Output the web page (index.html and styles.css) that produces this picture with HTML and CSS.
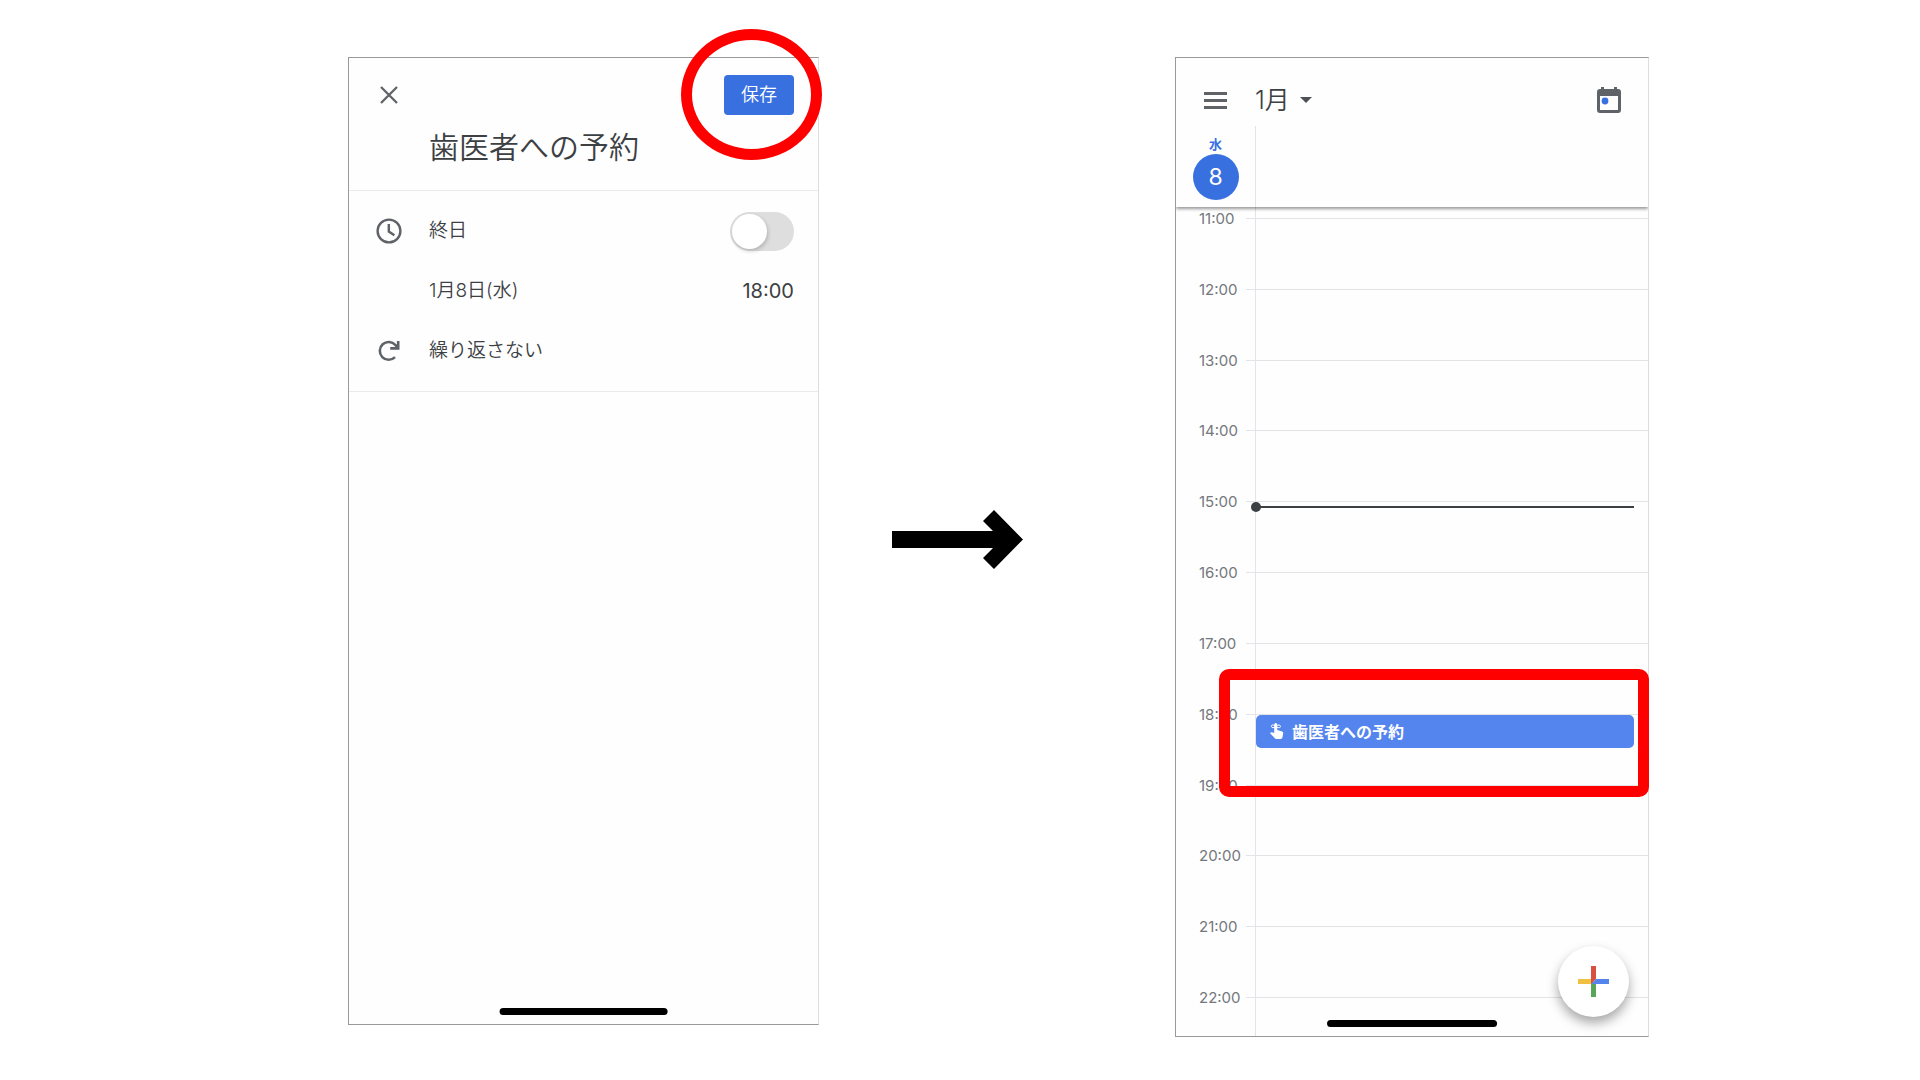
FILE: index.html
```html
<!DOCTYPE html>
<html lang="ja">
<head>
    <meta charset="UTF-8">
    <meta name="viewport" content="width=device-width, initial-scale=1.0">
    <title>カレンダー - リマインダーの保存</title>
    <link rel="stylesheet" href="styles.css">
</head>
<body>
    <main class="steps">
        <section class="step step-edit">
            <div class="phone phone-edit">
                <header class="edit-header">
                    <div class="edit-toolbar">
                        <button class="icon-button" type="button" aria-label="閉じる">
                            <svg width="18" height="18" viewBox="0 0 18 18" fill="none" stroke="#5f6368" stroke-width="2.3">
                                <path d="M1 1l16 16M17 1L1 17"/>
                            </svg>
                        </button>
                        <button class="save-button" type="button">保存</button>
                    </div>
                    <input class="title-input" type="text" value="歯医者への予約" aria-label="タイトル">
                </header>

                <div class="options">
                    <div class="option">
                        <span class="option-icon">
                            <svg width="26" height="26" viewBox="0 0 26 26" fill="none" stroke="#5f6368" stroke-width="2.4">
                                <circle cx="13" cy="13" r="11.4"/>
                                <path d="M12.8 6v7.6l5.6 3.6"/>
                            </svg>
                        </span>
                        <label class="option-text" for="allDay">終日</label>
                        <input class="switch" type="checkbox" id="allDay">
                    </div>
                    <div class="option">
                        <span class="option-icon"></span>
                        <button class="option-text" type="button">1月8日(水)</button>
                        <button class="option-time" type="button">18:00</button>
                    </div>
                    <div class="option">
                        <span class="option-icon">
                            <svg width="22" height="22" viewBox="0 0 22 22" fill="none" stroke="#5f6368" stroke-width="2.6">
                                <path d="M17 17.200A8.900 8.900 0 1 1 17.400 5L19.500 7.200"/>
                                <path d="M20.200 1v7.400h-8" />
                            </svg>
                        </span>
                        <button class="option-text" type="button">繰り返さない</button>
                    </div>
                </div>
                <div class="home-bar"></div>
            </div>
            <div class="mark-circle"></div>
        </section>

        <svg class="arrow" width="131" height="59" viewBox="0 0 131 59">
            <path d="M0 21h101L91 11 102 0l29 29.500L102 59 91 48l10-10H0z"/>
        </svg>

        <section class="step step-day">
            <div class="phone phone-day">
                <header class="day-header">
                    <div class="day-toolbar">
                        <button class="icon-button menu-button" type="button" aria-label="メニュー">
                            <svg width="23" height="17" viewBox="0 0 23 17" fill="#5f6368">
                                <path d="M0 0h23v3H0zM0 7h23v3H0zM0 14h23v3H0z"/>
                            </svg>
                        </button>
                        <button class="month-button" type="button">
                            1月
                            <svg width="12" height="6" viewBox="0 0 12 6" fill="#4d5156">
                                <path d="M0 0h12L6 6z"/>
                            </svg>
                        </button>
                        <button class="icon-button today-button" type="button" aria-label="今日">
                            <svg width="24" height="26" viewBox="0 0 24 26">
                                <path fill="#5f6368" fill-rule="evenodd" d="M4 0h3v2h10V0h3v2h1a3 3 0 0 1 3 3v18a3 3 0 0 1-3 3H3a3 3 0 0 1-3-3V5a3 3 0 0 1 3-3h1zM3 9v14h18V9z"/>
                                <circle cx="8" cy="14" r="3.400" fill="#3870e0"/>
                            </svg>
                        </button>
                    </div>
                    <div class="day-strip">
                        <div class="day">
                            <span class="day-name">水</span>
                            <span class="day-number">8</span>
                        </div>
                        <div class="all-day"></div>
                    </div>
                </header>

                <div class="hours">
                    <div class="hour hour-lead"><div class="slot"></div></div>
                    <div class="hour"><time>11:00</time><div class="slot"></div></div>
                    <div class="hour"><time>12:00</time><div class="slot"></div></div>
                    <div class="hour"><time>13:00</time><div class="slot"></div></div>
                    <div class="hour"><time>14:00</time><div class="slot"></div></div>
                    <div class="hour"><time>15:00</time><div class="slot"><div class="now"></div></div></div>
                    <div class="hour"><time>16:00</time><div class="slot"></div></div>
                    <div class="hour"><time>17:00</time><div class="slot"></div></div>
                    <div class="hour">
                        <time>18:00</time>
                        <div class="slot">
                            <a class="event" href="#">
                                <svg width="14" height="16" viewBox="0 0 14 16" fill="#fff">
                                    <path d="M4.200 1.500a1.500 1.500 0 0 1 3 0V7l5 1.500q1.200.5 1 1.800l-.7 4q-.3 1.700-1.800 1.700H6.500q-.8 0-1.400-.6L0 10.300l.8-.8q.4-.4 1-.2l2.400.6z"/>
                                    <path d="M5.700 3.300C3 1 1 2 1.400 3.600S4 5 5.700 3.300 10.500 1.500 10.500 3.400 7.500 5 5.700 3.300z" fill="none" stroke="#fff"/>
                                </svg>
                                歯医者への予約
                            </a>
                        </div>
                    </div>
                    <div class="hour"><time>19:00</time><div class="slot"></div></div>
                    <div class="hour"><time>20:00</time><div class="slot"></div></div>
                    <div class="hour"><time>21:00</time><div class="slot"></div></div>
                    <div class="hour"><time>22:00</time><div class="slot"></div></div>
                </div>

                <button class="add-button" type="button" aria-label="作成">
                    <svg width="31" height="31" viewBox="0 0 31 31">
                        <path fill="#f1bf42" d="M0 13h13v5H0z"/>
                        <path fill="#58a55c" d="M13 16h5v15h-5z"/>
                        <path fill="#5484ed" d="M18 13h13v5H13z"/>
                        <path fill="#d85140" d="M13 0h5v13l-5 5z"/>
                    </svg>
                </button>
                <div class="home-bar"></div>
            </div>
            <div class="mark-box"></div>
        </section>
    </main>
</body>
</html>
```

FILE: styles.css
```css
* {
    margin: 0;
    padding: 0;
    box-sizing: border-box;
}

body {
    font-family: Inter, 'Noto Sans CJK JP', sans-serif;
    background: #fff;
    color: #3c4043;
}

button {
    font: inherit;
    color: inherit;
    background: none;
    border: none;
    cursor: pointer;
}

svg {
    display: block;
}

.steps {
    display: grid;
    grid-template-columns: 348fr 471fr 356fr 474fr 271fr;
    align-items: start;
    padding: 57px 0 43px;
}

.step {
    position: relative;
}

.step-edit {
    grid-column: 2;
}

.step-day {
    grid-column: 4;
}

.arrow {
    grid-column: 3;
    align-self: center;
    margin-left: 73px;
    margin-bottom: 16px;
}

.phone {
    position: relative;
    display: flex;
    flex-direction: column;
    overflow: hidden;
    background: #fefefe;
    border: 1px solid #999;
    border-right-color: #ddd;
}

.phone-edit {
    min-height: 968px;
}

.phone-day {
    min-height: 980px;
}

.home-bar {
    position: absolute;
    left: 50%;
    bottom: 9px;
    width: 36%;
    height: 7px;
    border-radius: 4px;
    background: #000;
    transform: translateX(-50%);
}

.icon-button {
    display: flex;
    align-items: center;
    justify-content: center;
}

/* reminder form */
.edit-header {
    border-bottom: 1px solid #e8eaed;
    padding-bottom: 20px;
}

.edit-toolbar {
    display: flex;
    align-items: center;
    justify-content: space-between;
    height: 74px;
    padding: 0 24px 0 31px;
}

.save-button {
    width: 70px;
    height: 40px;
    border-radius: 4px;
    background: #3870e0;
    color: #fff;
    font-size: 18px;
    font-weight: 350;
    line-height: 24px;
}

.title-input {
    display: block;
    width: 100%;
    height: 46px;
    margin-top: -8px;
    padding: 0 24px 0 80px;
    border: none;
    outline: none;
    background: none;
    color: #3c4043;
    font-family: inherit;
    font-size: 30px;
    font-weight: 350;
    line-height: 46px;
}

.options {
    padding: 10px 24px 10px 0;
    border-bottom: 1px solid #e8eaed;
}

.option {
    display: flex;
    align-items: center;
    height: 60px;
    font-size: 19px;
    line-height: 26px;
}

.option-icon {
    display: flex;
    justify-content: center;
    width: 80px;
}

.option-text {
    flex: 1;
    text-align: left;
    font-weight: 350;
}

.option-time {
    font-size: 20px;
}

.switch {
    appearance: none;
    width: 64px;
    height: 39px;
    padding: 2px;
    border-radius: 20px;
    background: #dededf;
    cursor: pointer;
}

.switch::before {
    content: "";
    display: block;
    width: 35px;
    height: 35px;
    border-radius: 50%;
    background: #fff;
    box-shadow: 1px 2px 4px rgba(0, 0, 0, 0.2);
}

.switch:checked {
    background: #3870e0;
}

.switch:checked::before {
    margin-left: auto;
}

.mark-circle {
    position: absolute;
    top: -28px;
    right: -3px;
    width: 141px;
    height: 131px;
    border: 11px solid #f00;
    border-radius: 50%;
    pointer-events: none;
}

/* day view */
.day-header {
    position: relative;
    z-index: 1;
    background: #fefefe;
    box-shadow: 0 2px 3px rgba(0, 0, 0, 0.4);
}

.day-toolbar {
    display: flex;
    align-items: center;
    height: 68px;
    padding-top: 16px;
}

.menu-button {
    width: 79px;
}

.month-button {
    display: flex;
    align-items: center;
    gap: 10px;
    font-size: 25px;
    font-weight: 350;
    line-height: 36px;
}

.today-button {
    margin-left: auto;
    margin-right: 27px;
}

.day-strip {
    display: flex;
    height: 81px;
}

.day {
    display: flex;
    flex-direction: column;
    align-items: center;
    gap: 1px;
    width: 79px;
    padding-top: 9px;
}

.day-name {
    color: #3870e0;
    font-size: 13px;
    font-weight: 700;
    line-height: 18px;
}

.day-number {
    width: 46px;
    height: 46px;
    border-radius: 50%;
    background: #3870e0;
    color: #fff;
    font-size: 23px;
    line-height: 46px;
    text-align: center;
}

.all-day {
    flex: 1;
    border-left: 1px solid #e3e4e8;
}

.hours {
    flex: 1;
    display: grid;
    grid-template-rows: 11px repeat(11, minmax(48px, 1fr)) 39px;
}

.hour {
    display: flex;
}

.hour time {
    width: 70px;
    margin-top: -9px;
    padding-left: 23px;
    color: #74777c;
    font-size: 15px;
    line-height: 20px;
}

.hour::before {
    content: "";
    order: 1;
    width: 9px;
    border-top: 1px solid #e3e4e8;
}

.hour .slot {
    order: 2;
    position: relative;
    flex: 1;
    border-top: 1px solid #e3e4e8;
    border-left: 1px solid #e3e4e8;
}

.hour-lead {
    padding-left: 70px;
}

.hour-lead::before,
.hour-lead .slot {
    border-top: none;
}

/* current time */
.now {
    position: absolute;
    top: 4px;
    left: 0;
    right: 14px;
    height: 2px;
    background: #3c4043;
}

.now::before {
    content: "";
    position: absolute;
    top: -4px;
    left: -5px;
    width: 10px;
    height: 10px;
    border-radius: 50%;
    background: #3c4043;
}

.event {
    display: flex;
    align-items: center;
    gap: 8px;
    height: 33px;
    margin-right: 14px;
    padding-left: 14px;
    border-radius: 5px;
    background: #5484ed;
    color: #fff;
    font-size: 16px;
    font-weight: 700;
    text-decoration: none;
}

.add-button {
    position: absolute;
    right: 19px;
    bottom: 19px;
    display: flex;
    align-items: center;
    justify-content: center;
    width: 71px;
    height: 71px;
    border-radius: 50%;
    background: #fff;
    box-shadow: 0 6px 12px rgba(0, 0, 0, 0.35);
}

.mark-box {
    position: absolute;
    top: 612px;
    left: 44px;
    right: 0;
    height: 128px;
    border: 11px solid #f00;
    border-radius: 10px;
    pointer-events: none;
}
```
